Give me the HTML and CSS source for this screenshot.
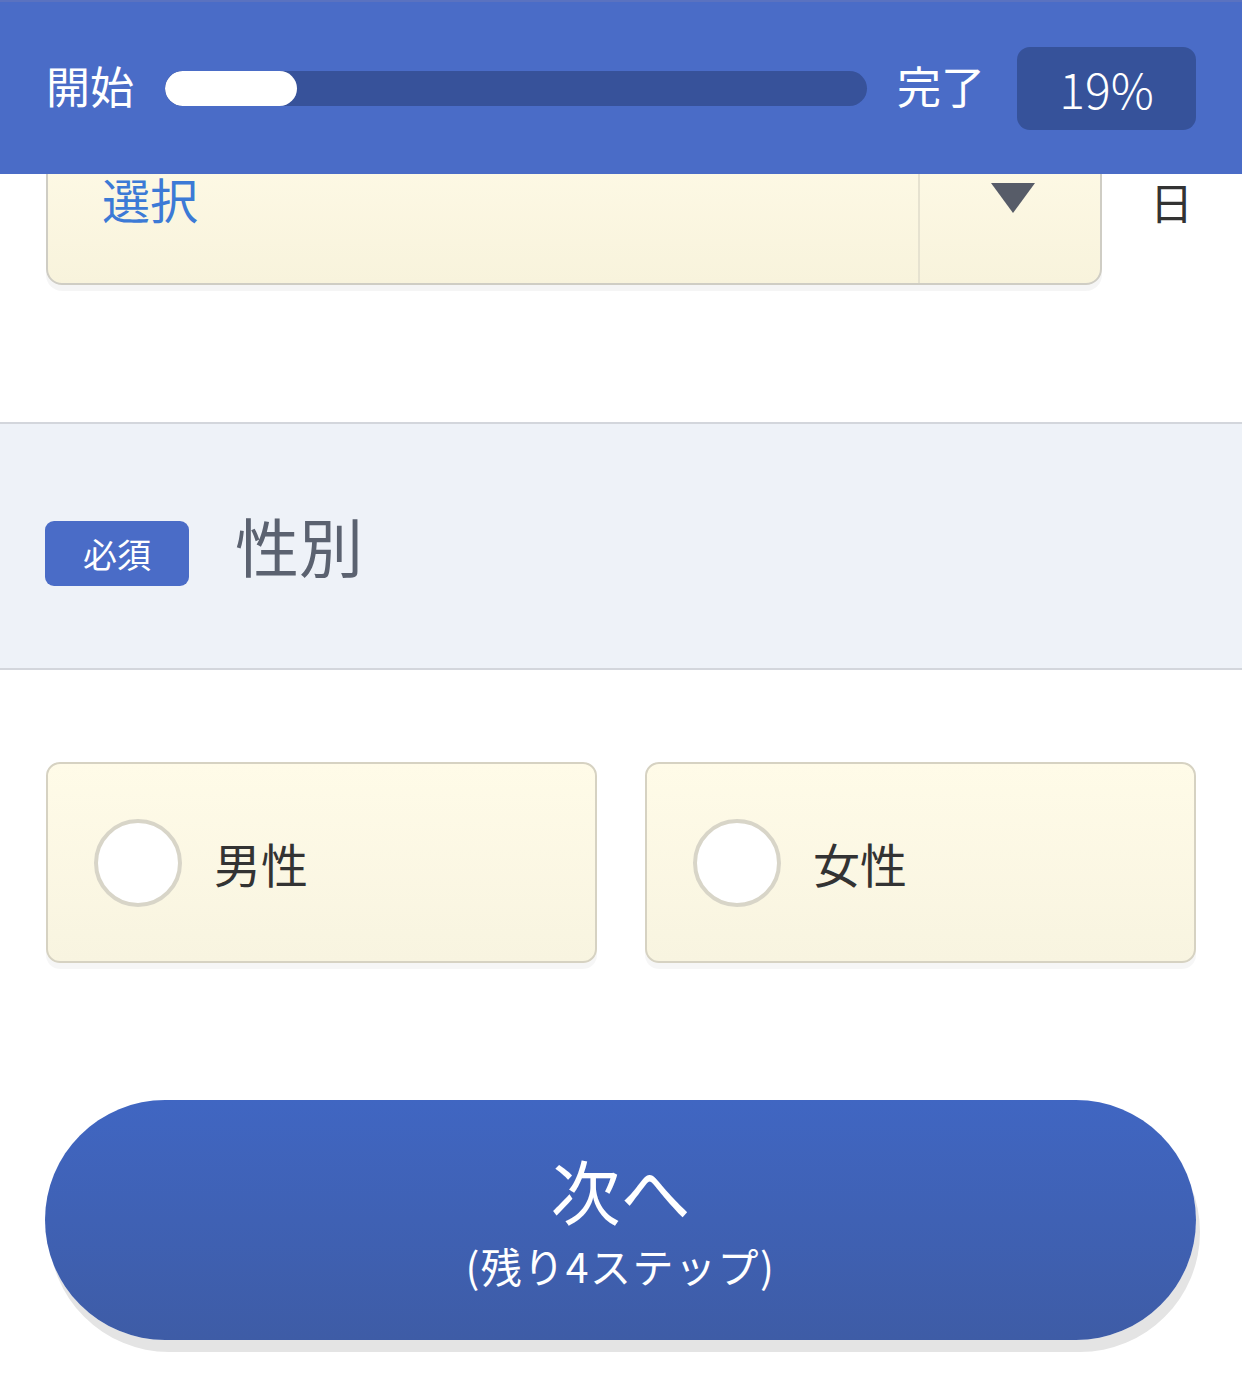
FILE: index.html
```html
<!DOCTYPE html>
<html lang="ja">
<head>
<meta charset="utf-8">
<link rel="stylesheet" href="styles.css">
</head>
<body>
<header class="progress-bar">
  <span class="progress-label">開始</span>
  <div class="track"><div class="fill" style="width:132px"></div></div>
  <span class="progress-label done">完了</span>
  <div class="percent">19%</div>
</header>

<main class="page">
  <div class="date-row">
    <div class="select-box">
      <span class="select-text">選択</span>
      <span class="select-arrow"><span class="tri"></span></span>
    </div>
    <span class="unit">日</span>
  </div>

  <section class="question-head">
    <span class="required">必須</span>
    <h2 class="question-title">性別</h2>
  </section>

  <div class="options">
    <label class="option"><span class="radio"></span><span class="option-text">男性</span></label>
    <label class="option"><span class="radio"></span><span class="option-text">女性</span></label>
  </div>

  <div class="actions">
    <button class="next-btn">
      <span class="next-main">次へ</span>
      <span class="next-sub">(残り4ステップ)</span>
    </button>
  </div>
</main>
</body>
</html>
```
FILE: styles.css
```css
html, body {
  margin: 0;
  padding: 0;
  background: #ffffff;
}
body {
  width: 1242px;
  height: 1384px;
  overflow: hidden;
  font-family: "Noto Sans CJK JP", "Noto Sans", sans-serif;
}

.progress-bar {
  position: fixed;
  top: 0;
  left: 0;
  right: 0;
  height: 172px;
  border-top: 2px solid #5a72c0;
  background: #4a6cc7;
  display: flex;
  align-items: center;
  padding: 0 46px 0 46px;
  box-sizing: content-box;
  z-index: 10;
}
.progress-label {
  color: #ffffff;
  font-size: 44px;
  line-height: 1;
  margin-top: -6px;
}
.track {
  flex: 1;
  height: 35px;
  margin: 0 30px 0 31px;
  border-radius: 18px;
  background: #37529a;
  overflow: hidden;
}
.fill {
  height: 100%;
  background: #ffffff;
  border-radius: 18px;
}
.progress-label.done {
  margin-right: 32px;
}
.percent {
  width: 179px;
  height: 83px;
  border-radius: 13px;
  background: #36529a;
  color: #ffffff;
  font-family: "Noto Sans CJK JP", "Noto Sans", sans-serif;
  font-weight: 300;
  font-size: 48px;
  display: flex;
  align-items: center;
  justify-content: center;
  padding-top: 0;
  box-sizing: border-box;
}

.page {
  padding-top: 117px;
}

.date-row {
  display: flex;
  align-items: flex-start;
  padding: 0 40px 0 46px;
}
.select-box {
  width: 1056px;
  height: 168px;
  box-sizing: border-box;
  border: 2px solid #cfcdc4;
  border-radius: 16px;
  background: linear-gradient(#fffbe8, #f8f3dc);
  box-shadow: 0 6px 0 rgba(0, 0, 0, 0.04);
  display: flex;
}
.select-text {
  flex: 1;
  display: flex;
  align-items: center;
  padding-left: 54px;
  padding-bottom: 6px;
  color: #3c7ad6;
  font-size: 48px;
  border-right: 2px solid #e6e2d0;
}
.select-arrow {
  width: 180px;
  box-sizing: border-box;
  display: flex;
  align-items: center;
  justify-content: center;
  padding-left: 6px;
}
.tri {
  width: 0;
  height: 0;
  border-left: 22px solid transparent;
  border-right: 22px solid transparent;
  border-top: 30px solid #575c68;
  margin-top: -6px;
}
.unit {
  margin-left: 48px;
  margin-top: 60px;
  font-size: 43px;
  line-height: 48px;
  color: #333333;
}

.question-head {
  margin-top: 137px;
  height: 244px;
  border-top: 2px solid #d3d6dc;
  border-bottom: 2px solid #d3d6dc;
  background: #eef2f8;
  display: flex;
  align-items: center;
  padding-left: 45px;
}
.required {
  width: 144px;
  height: 65px;
  margin-top: 14px;
  border-radius: 9px;
  background: #4a6cc7;
  color: #ffffff;
  font-size: 34px;
  display: flex;
  align-items: center;
  justify-content: center;
}
.question-title {
  margin: -4px 0 0 46px;
  font-weight: 400;
  font-size: 64px;
  color: #5b6270;
}

.options {
  display: flex;
  gap: 48px;
  padding: 0 46px;
  margin-top: 92px;
}
.option {
  flex: 1;
  height: 201px;
  box-sizing: border-box;
  border: 2px solid #d6d2c2;
  border-radius: 14px;
  background: linear-gradient(#fffbe8, #f8f4e0);
  box-shadow: 0 6px 0 rgba(0, 0, 0, 0.035);
  display: flex;
  align-items: center;
  padding-left: 46px;
}
.radio {
  width: 88px;
  height: 88px;
  box-sizing: border-box;
  border: 4px solid #d8d5c8;
  border-radius: 50%;
  background: #ffffff;
}
.option-text {
  margin-left: 32px;
  font-size: 47px;
  color: #333333;
}

.actions {
  padding: 0 46px 0 45px;
  margin-top: 137px;
}
.next-btn {
  width: 100%;
  height: 240px;
  border: none;
  border-radius: 120px;
  background: linear-gradient(#4066c2, #3e5ca6);
  box-shadow: 4px 12px 0 #e4e4e4;
  color: #ffffff;
  font-family: "Noto Sans CJK JP", "Noto Sans", sans-serif;
  display: flex;
  flex-direction: column;
  align-items: center;
  justify-content: center;
  padding: 0;
}
.next-main {
  font-size: 70px;
  line-height: 1;
  margin-top: 0;
}
.next-sub {
  font-size: 41px;
  line-height: 1;
  letter-spacing: 1.5px;
  margin-top: 20px;
}
```
